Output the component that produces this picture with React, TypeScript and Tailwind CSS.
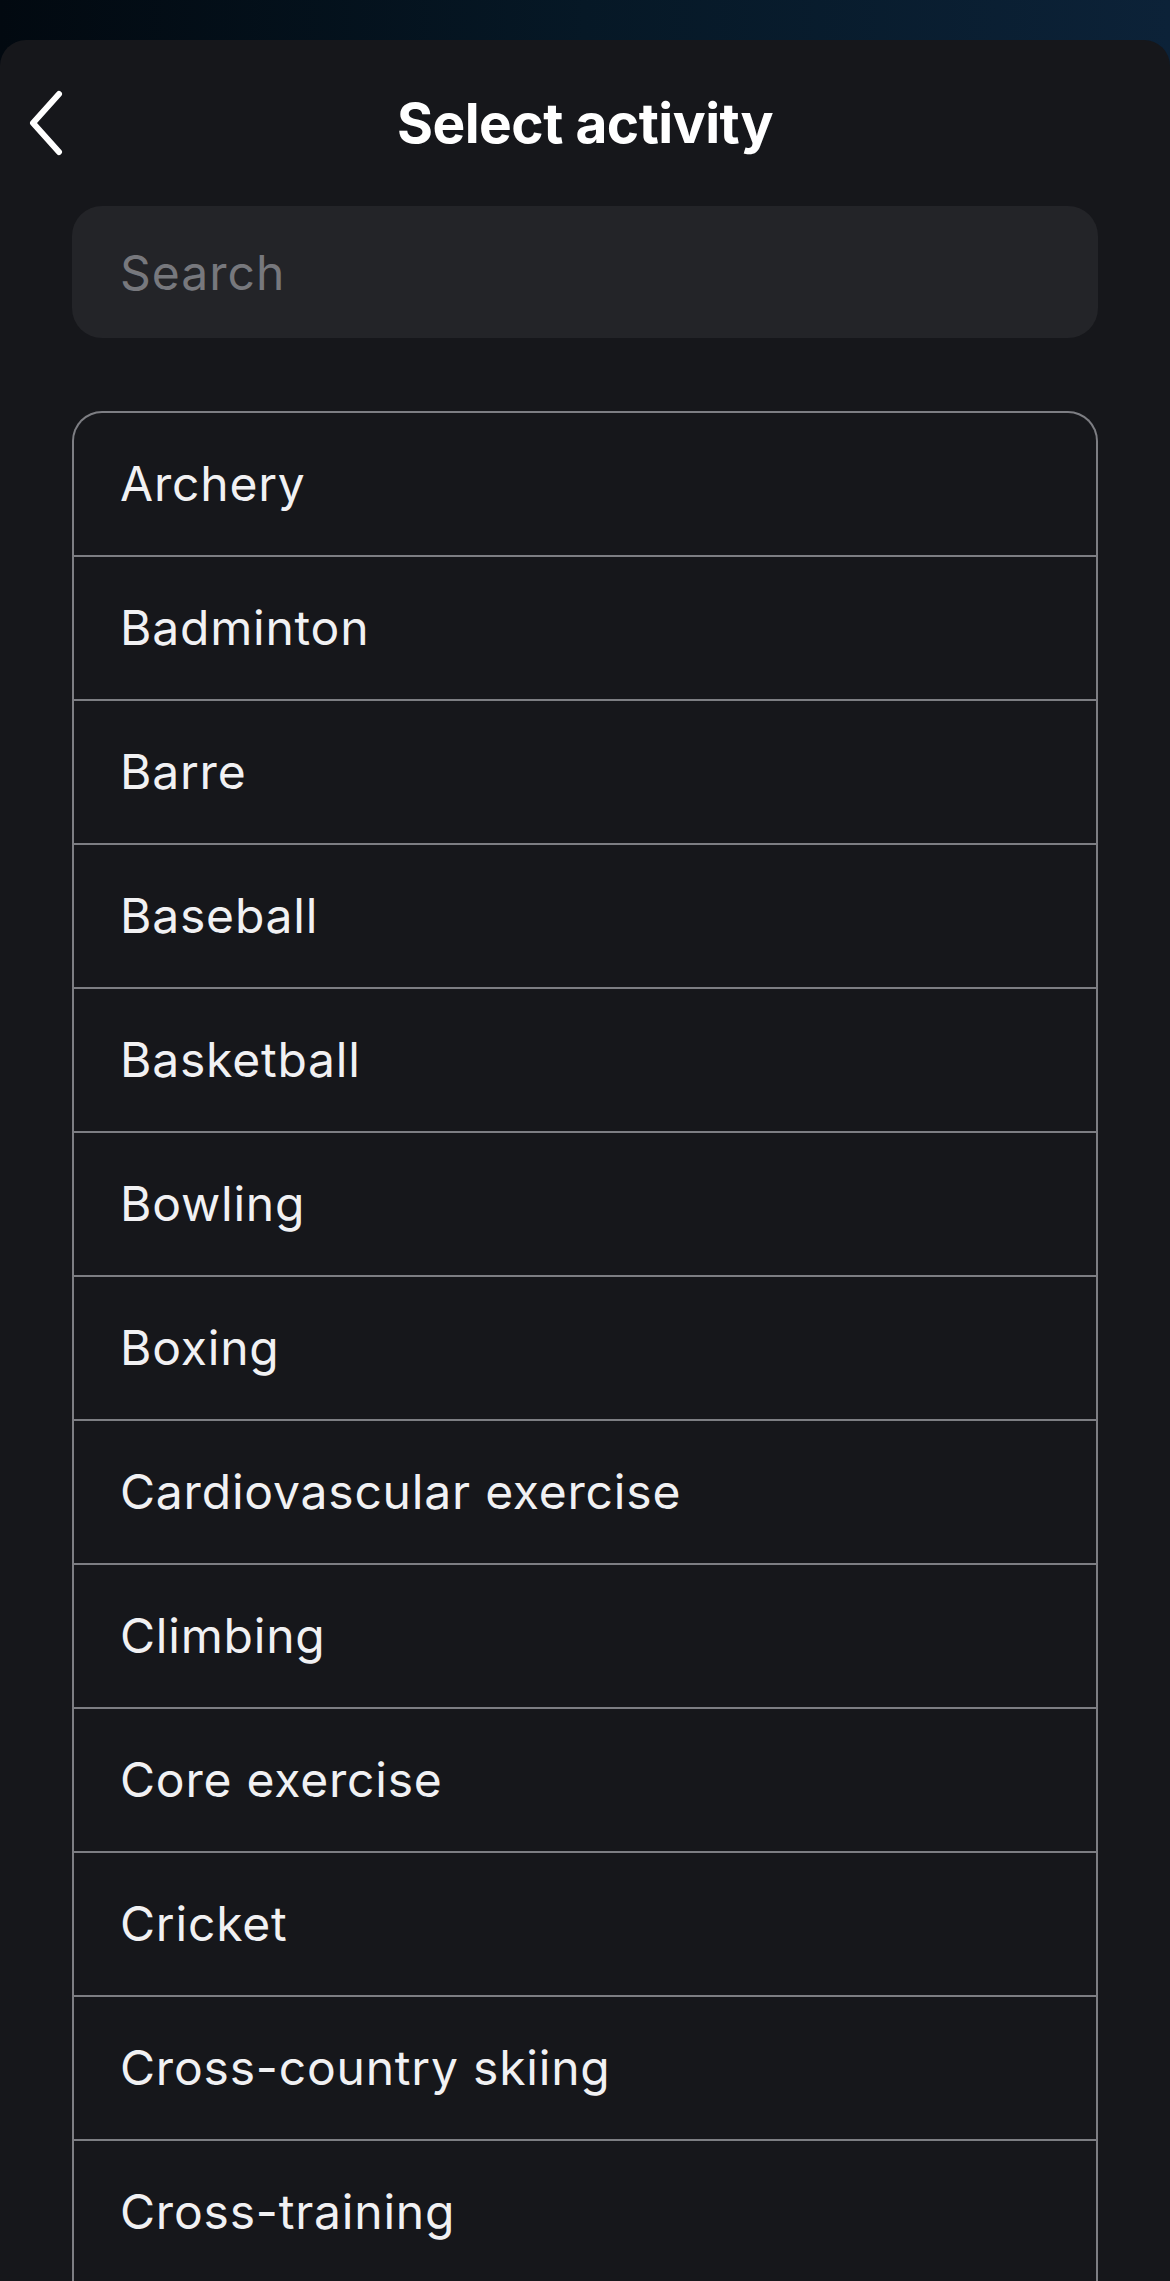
import React, { useState } from 'react';

const ACTIVITIES = [
  'Archery',
  'Badminton',
  'Barre',
  'Baseball',
  'Basketball',
  'Bowling',
  'Boxing',
  'Cardiovascular exercise',
  'Climbing',
  'Core exercise',
  'Cricket',
  'Cross-country skiing',
  'Cross-training',
];

const App: React.FC = () => {
  const [query, setQuery] = useState('');
  const items = ACTIVITIES.filter(a => a.toLowerCase().includes(query.toLowerCase()));

  return (
    <div className="w-[1170px] h-[2281px] overflow-hidden flex flex-col pt-[40px] bg-gradient-to-r from-[#020910] via-[#061826] to-[#0c2238] font-['Inter',sans-serif]">
      <div className="flex-1 flex flex-col bg-[#16171b] rounded-t-[26px]">
        {/* Header */}
        <div className="relative shrink-0 h-[166px] flex items-center justify-center">
          <button className="absolute left-[21px] top-1/2 -translate-y-1/2 w-[48px] h-[72px] flex items-center justify-center">
            <svg width="40" height="66" viewBox="0 0 40 66" fill="none">
              <path d="M34 4 L8 33 L34 62" stroke="#ffffff" strokeWidth="6" strokeLinecap="round" strokeLinejoin="round" />
            </svg>
          </button>
          <h1 className="text-[55px] font-bold text-white tracking-[-0.5px]">Select activity</h1>
        </div>

        {/* Search */}
        <div className="shrink-0 px-[72px]">
          <input
            value={query}
            onChange={e => setQuery(e.target.value)}
            placeholder="Search"
            className="w-full h-[132px] rounded-[30px] bg-[#232428] px-[48px] text-[48px] tracking-[1px] text-white placeholder:text-[#77787d] outline-none"
          />
        </div>

        {/* List (continues below the fold) */}
        <div className="shrink-0 px-[72px] mt-[73px]">
          <div className="border-2 border-b-0 border-[#7d7e83] rounded-t-[30px] pb-[40px]">
            {items.map((a, i) => (
              <div
                key={a}
                className={`flex items-center px-[46px] text-[48px] tracking-[0.8px] text-[#f1f1f3] ${i > 0 ? 'h-[144px] border-t-2 border-[#7d7e83]' : 'h-[142px]'}`}
              >
                {a}
              </div>
            ))}
          </div>
        </div>
      </div>
    </div>
  );
};

export default App;
